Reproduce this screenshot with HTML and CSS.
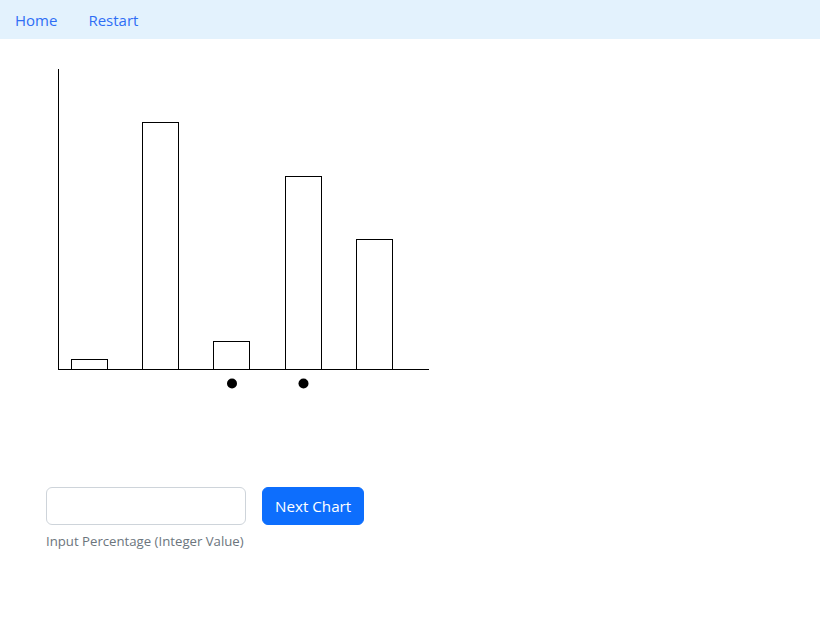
FILE: index.html
```html
<!DOCTYPE html>
<html>
<head>
<meta charset="utf-8">
<link rel="stylesheet" href="styles.css">
</head>
<body>
<nav class="navbar">
  <a class="nav-link" href="#">Home</a>
  <a class="nav-link" href="#">Restart</a>
</nav>
<main class="content">
  <svg class="chart" width="450" height="448" viewBox="0 0 450 448">
    <g fill="#fff" stroke="#000" stroke-width="1">
      <rect x="71.5" y="320.5" width="36" height="10"/>
      <rect x="142.5" y="83.5" width="36" height="247"/>
      <rect x="213.5" y="302.5" width="36" height="28"/>
      <rect x="285.5" y="137.5" width="36" height="193"/>
      <rect x="356.5" y="200.5" width="36" height="130"/>
    </g>
    <g stroke="#000" stroke-width="1" fill="none">
      <line x1="58.5" y1="30" x2="58.5" y2="331"/>
      <line x1="58" y1="330.5" x2="429" y2="330.5"/>
    </g>
    <circle cx="232" cy="344.5" r="5" fill="#000"/>
    <circle cx="303.5" cy="344.5" r="5" fill="#000"/>
  </svg>
  <form class="answer">
    <div class="field">
      <input class="input" type="text">
      <div class="help">Input Percentage (Integer Value)</div>
    </div>
    <button class="btn" type="button">Next Chart</button>
  </form>
</main>
</body>
</html>
```
FILE: styles.css
```css
* { box-sizing: border-box; }
body {
  margin: 0;
  font-family: "Open Sans", "Noto Sans", sans-serif;
  font-size: 16px;
  color: #212529;
  background: #fff;
}
.navbar {
  background: #e3f2fd;
  height: 39px;
  display: flex;
  align-items: center;
  padding-left: 15px;
  gap: 31px;
}
.nav-link {
  color: #2f6ef5;
  text-decoration: none;
  font-size: 15px;
}
.content { display: flex; flex-direction: column; }
.chart { display: block; }
.answer {
  display: flex;
  align-items: flex-start;
  gap: 16px;
  padding-left: 46px;
}
.field { display: flex; flex-direction: column; }
.input {
  width: 200px;
  height: 38px;
  border: 1px solid #ced4da;
  border-radius: 6px;
  padding: 6px 12px;
  font: inherit;
}
.help {
  margin-top: 7px;
  font-size: 13.2px;
  color: #6c757d;
}
.btn {
  height: 38px;
  padding: 0 12px;
  background: #0d6efd;
  color: #fff;
  border: 1px solid #0d6efd;
  border-radius: 6px;
  font: inherit;
  font-size: 15.2px;
}
```
